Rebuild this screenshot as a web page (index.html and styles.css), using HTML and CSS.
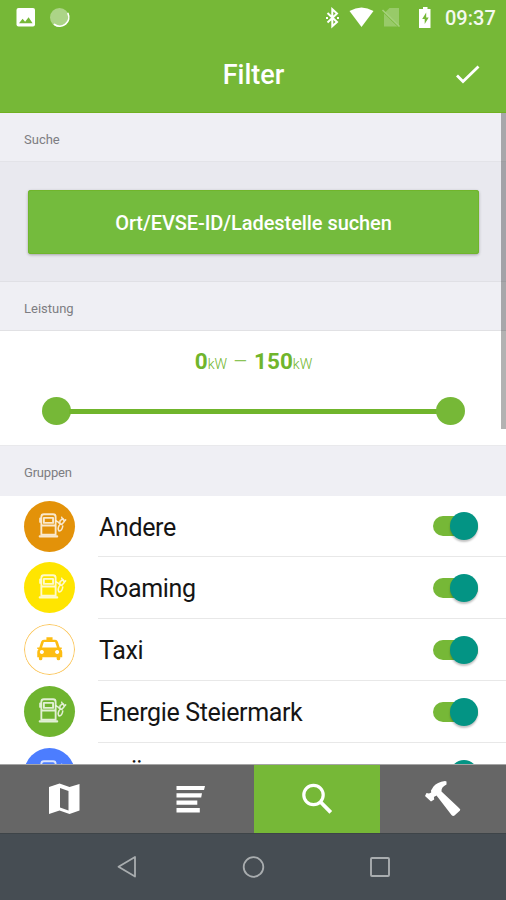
FILE: index.html
```html
<!DOCTYPE html>
<html lang="de">
<head>
<meta charset="utf-8">
<title>Filter</title>
<link rel="stylesheet" href="styles.css">
</head>
<body>
<svg class="defs" width="0" height="0" aria-hidden="true">
  <symbol id="pump" viewBox="0 0 50 50">
    <g fill="none" stroke="#fff" stroke-opacity=".8" stroke-linejoin="round" stroke-linecap="round">
      <path stroke-width="1.8" d="M17 15.500q0-2.500 2.500-2.500h9q2.500 0 2.500 2.500v17.500h-14zM19.500 16.500h9v5h-9zM15.800 17v3.500M17 24h14"/>
      <path stroke-width="2.200" d="M15.500 34.700h17"/>
      <path stroke-width="1.500" d="M31.500 19.500l2.500 1.500 1.500 2M34.500 24q-2 3.500 0 5.500 3-.5 3.500-5M35.500 19l3-1.500 1 2.500-2.500 3-2-1zM37.500 17.500l-.5-1.500M39.800 19.500l1-1"/>
    </g>
  </symbol>
</svg>
<div class="screen">
  <div class="status">
    <svg class="status-left" width="60" height="22" viewBox="0 0 60 22">
      <rect x="0.500" y="1" width="18.500" height="18.500" rx="2" fill="#fff"/>
      <path d="M3 16.300l3.600-4.600 2.500 3 3.500-4.500 4 6.100z" fill="#76b837"/>
      <circle cx="43.500" cy="10.500" r="9.500" fill="#fff" opacity=".4"/>
      <path d="M52 6.500a9 9 0 0 1-13.500 11" fill="none" stroke="#fff" stroke-width="1.700" stroke-linecap="round"/>
    </svg>
    <div class="status-right">
      <svg width="110" height="24" viewBox="0 0 110 24">
        <path d="M2.500 6l9.500 9-4.700 4.300V2.200L12 6.500l-9.500 9" fill="none" stroke="#fff" stroke-width="2"/>
        <path d="M1 11h2M12 11h2" stroke="#fff" stroke-width="2"/>
        <path d="M24.500 4Q36.500-3 48.500 4L36.500 20z" fill="#fff"/>
        <path d="M64.500 1H74v18.500h-15V6.500z" fill="#fff" opacity=".25"/>
        <path d="M58 4L75 20.500" stroke="#76b837" stroke-width="2"/>
        <path d="M57.500 3l17 16.500" stroke="#fff" stroke-opacity=".35" stroke-width="1.600"/>
        <path d="M98 0h4.500v2h3v19H94V2h4z" fill="#fff"/>
        <path d="M101.200 5.500l-4 6.500h2.500v5l4-6.600h-2.500z" fill="#76b837"/>
      </svg>
      <span class="clock">09:37</span>
    </div>
  </div>
  <header class="titlebar">
    <h1>Filter</h1>
    <svg class="check" width="26" height="20" viewBox="0 0 26 20"><path d="M2 10.500l6 6L23.500 1.500" fill="none" stroke="#fff" stroke-width="2.800"/></svg>
  </header>
  <main class="content">
    <h2 class="section search-head">Suche</h2>
    <div class="search"><button>Ort/EVSE-ID/Ladestelle suchen</button></div>
    <h2 class="section power-head">Leistung</h2>
    <div class="power">
      <p class="range"><b>0</b><small>kW</small><i>–</i><b>150</b><small>kW</small></p>
      <div class="slider"><span></span><em></em><span></span></div>
    </div>
    <h2 class="section groups-head">Gruppen</h2>
    <ul class="groups">
      <li><svg class="badge orange"><use href="#pump"/></svg><div class="row"><span>Andere</span><i class="toggle"></i></div></li>
      <li><svg class="badge yellow"><use href="#pump"/></svg><div class="row"><span>Roaming</span><i class="toggle"></i></div></li>
      <li><svg class="badge taxi" viewBox="0 0 50 50"><circle cx="25" cy="25" r="24.500" fill="#fff" stroke="#fbc65c"/>
        <path fill="#fdbd12" fill-rule="evenodd" d="M22 13h6v2.500h2.500q2 0 2.700 2l1.800 5.500h2v1.500h-1q1.500 1.200 1.500 3v5h-2v1.500q0 1.500-1.700 1.500T32 34v-1.500H18V34q0 1.500-1.700 1.500T14.600 34v-1.500H13v-5q0-1.800 1.300-3h-1.300V23h2l1.800-5.500q.7-2 2.700-2H22zM19.500 17.700L17.700 23h14.600l-1.800-5.300zM17.500 25.500a2 2 0 1 0 .01 0zM32.500 25.500a2 2 0 1 0 .01 0z"/></svg><div class="row"><span>Taxi</span><i class="toggle"></i></div></li>
      <li><svg class="badge green"><use href="#pump"/></svg><div class="row"><span>Energie Steiermark</span><i class="toggle"></i></div></li>
      <li><svg class="badge blue"><use href="#pump"/></svg><div class="row"><span>BEÖ</span><i class="toggle"></i></div></li>
    </ul>
    <div class="scrollbar"></div>
  </main>
  <nav class="tabs">
    <a><svg width="32" height="32" viewBox="0 0 32 32"><path fill="#fff" fill-rule="evenodd" d="M1 4L11.500.5l10 3.500L31.500 1v26.500L21.500 31l-10-3.500L1 31zM12 5v19.500l8.500 3V8z"/></svg></a>
    <a><svg width="30" height="28" viewBox="0 0 30 28"><path fill="#fff" d="M.5 1H29l-1 4H.5zM.5 8.300H26l-.8 4.200H.5zM.5 15.500h20.800v4.200H.5zM.5 23h23.300v4.400H.5z"/></svg></a>
    <a class="active"><svg width="32" height="32" viewBox="0 0 32 32"><g fill="none" stroke="#fff"><circle cx="12.500" cy="12" r="9.700" stroke-width="3.200"/><path d="M19.500 19l10.300 10.300" stroke-width="3.800"/></g></svg></a>
    <a><svg class="hammer" width="38" height="38" viewBox="0 0 38 38"><path fill="#fff" d="M22.500 1.500L21 1Q13 2 9.500 6.500L7 10.500l.2 2L5 13.500 2.500 13 1 16l6 5.500 3.200-2-.3-2.500 2.600-1.500L27.500 35q1.500 1.500 3 .5l5.500-5q1-1-1-2.500L17.500 11.500Q17 7 22.500 4.500z"/></svg></a>
  </nav>
  <div class="system">
    <svg width="22" height="24" viewBox="0 0 22 24"><path d="M19 2v19.500L2.500 11.700z" fill="none" stroke="#a9adaf" stroke-width="1.800" stroke-linejoin="round"/></svg>
    <svg width="24" height="24" viewBox="0 0 24 24"><circle cx="12.500" cy="12" r="9.800" fill="none" stroke="#a9adaf" stroke-width="1.800"/></svg>
    <svg width="22" height="22" viewBox="0 0 22 22"><rect x="2" y="2" width="18" height="18" rx="1" fill="none" stroke="#a9adaf" stroke-width="1.900"/></svg>
  </div>
</div>
</body>
</html>
```

FILE: styles.css
```css
* { box-sizing: border-box; }
body { margin: 0; font-family: Roboto, "Liberation Sans", sans-serif; }
h1, h2, p, ul { margin: 0; padding: 0; }
.defs { display: none; }
.screen { width: 506px; height: 900px; display: flex; flex-direction: column; overflow: hidden; background: #fff; }

.status { height: 38px; flex: none; display: flex; justify-content: space-between; align-items: flex-start; padding: 7px 10px 0 16px; background: #76b837; }
.status-right { display: flex; gap: 10px; }
.clock { color: #fff; font-size: 20px; line-height: 23px; font-weight: 500; width: 51px; white-space: nowrap; opacity: .92; }
.titlebar { height: 75px; flex: none; display: grid; grid-template-columns: 60px 1fr 60px; align-items: center; background: #76b837; border-bottom: 1px solid #70b020; }
.titlebar h1 { grid-column: 2; text-align: center; font-size: 27px; line-height: 32px; font-weight: 500; color: #fff; padding-left: 1px; }
.check { justify-self: center; margin-right: 16px; }

.content { height: 652px; flex: none; position: relative; overflow: hidden; border-bottom: 1px solid #a5a5a5; }
.section { display: flex; align-items: center; padding-left: 24px; font-size: 13px; font-weight: 400; color: #7d7d82; background: #efeff4; }
.search-head { height: 49px; padding-top: 5px; border-bottom: 1px solid #e3e3e8; }
.power-head { height: 49px; padding-top: 5px; border-bottom: 1px solid #e1e1e4; }
.groups-head { height: 51px; padding-top: 3px; border-top: 1px solid #e9e9ec; letter-spacing: -.2px; }
.search { height: 120px; padding: 28px 27px 28px 28px; background: #e9e9ef; border-bottom: 1px solid #e0e0e5; }
.search button { display: block; width: 100%; height: 64px; border: 0; border-radius: 3px; padding: 2px 0 0; background: #74bb3d; color: #fff; font: 500 20px Roboto, sans-serif; letter-spacing: -.07px; box-shadow: 0 1px 3px rgba(0,0,0,.3), inset 0 0 0 1px #70b52c; }

.power { height: 114px; padding: 16px 41px 0 42px; background: #fff; }
.range { display: flex; justify-content: center; align-items: baseline; line-height: 28px; color: #70b52c; }
.range b { font-size: 22.5px; font-weight: 700; }
.range small { font-size: 14px; font-weight: 300; }
.range i { font-size: 23px; font-style: normal; font-weight: 300; margin: 0 6px; opacity: .8; }
.slider { height: 28px; margin-top: 19px; display: flex; align-items: center; }
.slider span { width: 29px; height: 28px; border-radius: 50%; background: #76b837; }
.slider em { flex: 1; height: 5px; margin: 0 -2px; background: #70b52c; }

.groups { list-style: none; }
.groups li { height: 62px; display: flex; align-items: center; padding-left: 24px; }
.groups li:first-child { height: 61px; }
.badge { width: 51px; height: 51px; flex: none; border-radius: 50%; margin-bottom: 1px; }
.orange { background: #e39209; }
.yellow { background: #ffe500; }
.green { background: #6fb42f; }
.blue { background: #4c7dff; }
.row { flex: 1; align-self: stretch; display: flex; align-items: center; justify-content: space-between; margin-left: 23px; padding: 0 28px 0 1px; border-bottom: 1px solid #e8e8e8; }
.row span { font-size: 25px; line-height: 30px; letter-spacing: -.36px; color: #151515; padding-top: 3px; }
.toggle { width: 45px; height: 20px; border-radius: 10px; background: #76b837; display: flex; justify-content: flex-end; align-items: center; }
.toggle::after { content: ""; width: 28px; height: 28px; border-radius: 50%; background: #039484; box-shadow: 0 2px 2px rgba(0,0,0,.24); }
.scrollbar { position: absolute; top: 0; right: 0; width: 5px; height: 316px; background: rgba(0,0,0,.3); }

.tabs { height: 68px; flex: none; display: grid; grid-template-columns: 127px 127px 126px 126px; background: #666; }
.tabs a { display: flex; align-items: center; justify-content: center; }
.tabs .active { background: #76b837; }
.system { height: 67px; flex: none; display: grid; grid-template-columns: repeat(3, 126.5px); justify-content: center; justify-items: center; align-items: center; background: #464d53; border-top: 1px solid #3e4448; }
```
